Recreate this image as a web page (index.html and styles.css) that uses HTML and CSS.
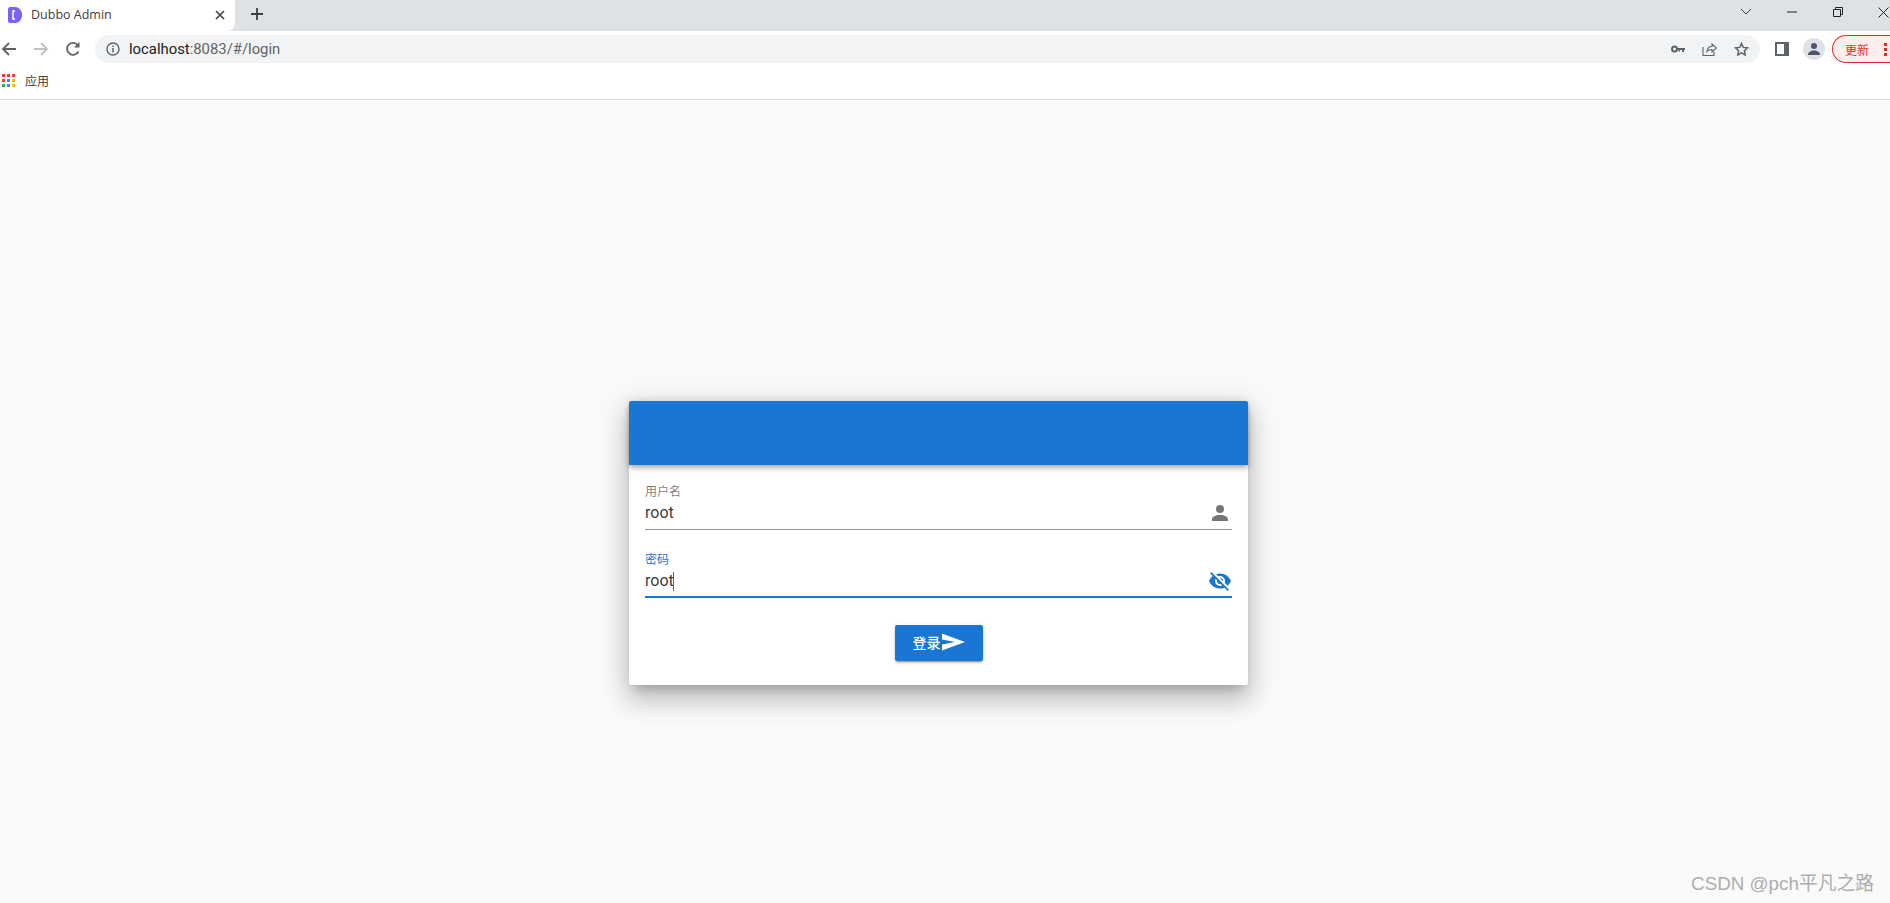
FILE: index.html
```html
<!DOCTYPE html>
<html lang="zh">
<head>
  <meta charset="UTF-8">
  <title>Dubbo Admin</title>
  <link rel="stylesheet" href="styles.css">
</head>
<body>
  <div class="browser">
    <div class="tabstrip">
      <div class="tab">
        <svg class="favicon" width="14" height="16" viewBox="0 0 14 16"><path d="M2 0h5c4 0 7 3.500 7 8s-3 8-7 8H2c-1 0-2-1-2-2V2c0-1 1-2 2-2z" fill="#7b61f5"/><path d="M7 4H5v8h2" fill="none" stroke="#fff" stroke-width="1.500"/></svg>
        <span class="tab_title">Dubbo Admin</span>
        <svg class="tab_close" width="10" height="10" viewBox="0 0 10 10"><path d="M1 1l8 8M9 1l-8 8" stroke="#444" stroke-width="1.700"/></svg>
      </div>
      <svg class="new_tab" width="14" height="14" viewBox="0 0 14 14"><path d="M7 1v12M1 7h12" stroke="#3c4043" stroke-width="1.800"/></svg>
      <div class="win_btns">
        <svg width="12" height="8" viewBox="0 0 12 8"><path d="M1 1l5 5 5-5" fill="none" stroke="#444" stroke-width="1"/></svg>
        <svg width="10" height="2" viewBox="0 0 10 2"><path d="M0 1h10" stroke="#222" stroke-width="1"/></svg>
        <svg width="10" height="10" viewBox="0 0 10 10"><path d="M.5 2.500h7v7h-7zM2.500 2.500v-2h7v7h-2" fill="none" stroke="#222" stroke-width="1"/></svg>
        <svg width="11" height="11" viewBox="0 0 11 11"><path d="M.5.5l10 10M10.500.5l-10 10" stroke="#222" stroke-width="1"/></svg>
      </div>
    </div>
    <div class="toolbar">
      <svg class="nav_icon" width="16" height="16" viewBox="0 0 16 16"><path d="M15 8H2M8 2L2 8l6 6" fill="none" stroke="#5f6368" stroke-width="1.800"/></svg>
      <svg class="nav_icon" width="16" height="16" viewBox="0 0 16 16"><path d="M1 8h13M8 2l6 6-6 6" fill="none" stroke="#bdc1c6" stroke-width="1.800"/></svg>
      <svg class="nav_icon" width="16" height="16" viewBox="0 0 16 16"><path d="M13.500 10.500A6 6 0 1 1 13 4.500" fill="none" stroke="#5f6368" stroke-width="1.800"/><path d="M14.500 1v5.500H9z" fill="#5f6368"/></svg>
      <div class="omnibox">
        <svg width="14" height="14" viewBox="0 0 14 14"><circle cx="7" cy="7" r="6" fill="none" stroke="#5f6368" stroke-width="1.400"/><path d="M7 6v4.500M7 3.500v1.500" stroke="#5f6368" stroke-width="1.500"/></svg>
        <span class="url"><b>localhost</b>:8083/#/login</span>
        <div class="omni_right">
          <svg width="14" height="8" viewBox="0 0 14 8"><circle cx="3.500" cy="4" r="2.500" fill="none" stroke="#5f6368" stroke-width="2"/><path d="M6 3h8v2h-1v2h-2V5H9v1.500H7.500V5H6z" fill="#5f6368"/></svg>
          <svg width="15" height="14" viewBox="0 0 15 14"><path d="M1 5v8.500h11V10M5 9.500C5.500 6 8 4.500 10 4.500V2l4.500 4-4.500 4V7.500c-2 0-3.700.500-5 2z" fill="none" stroke="#5f6368" stroke-width="1.100"/></svg>
          <svg width="15" height="14" viewBox="0 0 15 14"><path d="M7.500 1.500l1.800 3.900 4.200.500-3.100 2.900.800 4.200-3.700-2.100-3.700 2.100.800-4.200L1.500 5.900l4.200-.500z" fill="none" stroke="#5f6368" stroke-width="1.500"/></svg>
        </div>
      </div>
      <div class="sidepanel"></div>
      <div class="avatar">
        <svg width="14" height="14" viewBox="0 0 14 14"><circle cx="7" cy="4" r="3" fill="#4a5568"/><path d="M1 13c0-3 3-4.500 6-4.500s6 1.500 6 4.500z" fill="#4a5568"/></svg>
      </div>
      <div class="update"><span>更新</span><i class="dots"></i></div>
    </div>
    <div class="bookmarks">
      <div class="apps">
        <i class="r"></i><i class="r"></i><i class="r"></i>
        <i class="r"></i><i class="b"></i><i class="y"></i>
        <i class="g"></i><i class="b"></i><i class="y"></i>
      </div>
      <span class="apps_label">应用</span>
    </div>
  </div>

  <div class="main">
    <div class="login_card">
      <div class="card_head"></div>
      <form class="card_body">
        <div class="field">
          <label class="field_label">用户名</label>
          <div class="field_row">
            <span class="field_value">root</span>
            <svg width="24" height="24" viewBox="0 0 24 24"><path fill="#757575" d="M12 4a4 4 0 0 1 4 4 4 4 0 0 1-4 4 4 4 0 0 1-4-4 4 4 0 0 1 4-4m0 10c4.420 0 8 1.790 8 4v2H4v-2c0-2.210 3.580-4 8-4z"/></svg>
          </div>
        </div>
        <div class="field focused">
          <label class="field_label">密码</label>
          <div class="field_row">
            <span class="field_value">root<i class="caret"></i></span>
            <svg width="24" height="24" viewBox="0 0 24 24"><path fill="#1976d2" d="M11.830 9L15 12.160V12a3 3 0 0 0-3-3h-.170m-4.300.800l1.550 1.550c-.050.210-.080.420-.080.650a3 3 0 0 0 3 3c.220 0 .440-.030.650-.080l1.550 1.550c-.670.330-1.410.530-2.200.530a5 5 0 0 1-5-5c0-.790.200-1.530.530-2.200M2 4.270l2.280 2.280.450.450C3.080 8.300 1.780 10 1 12c1.730 4.390 6 7.500 11 7.500 1.550 0 3.030-.300 4.380-.840l.430.420L19.730 22 21 20.730 3.270 3M12 7a5 5 0 0 1 5 5c0 .640-.130 1.260-.360 1.820l2.930 2.930c1.500-1.250 2.700-2.890 3.430-4.750-1.730-4.390-6-7.500-11-7.500-1.400 0-2.740.250-4 .700l2.170 2.150C10.740 7.130 11.350 7 12 7z"/></svg>
          </div>
        </div>
        <div class="actions">
          <button type="button" class="login_btn">登录<svg width="24" height="24" viewBox="0 0 24 24"><path fill="#fff" d="M1 3.500L24 12 1 20.500V14.500L14 12 1 9.500z"/></svg></button>
        </div>
      </form>
    </div>
  </div>

  <div class="watermark">CSDN @pch平凡之路</div>
</body>
</html>
```

FILE: styles.css
```css
* {
  box-sizing: border-box;
}

html, body {
  height: 100%;
}

body {
  position: relative;
  margin: 0;
  background: #fafafa;
  display: flex;
  flex-direction: column;
  overflow: hidden;
  font-family: "Roboto", "Noto Sans CJK SC", sans-serif;
}

.browser {
  background: #fff;
  border-bottom: 1px solid #dadce0;
  height: 100px;
}

.tabstrip {
  display: flex;
  align-items: center;
  height: 31px;
  background: #dee1e6;
}
.tab {
  display: flex;
  align-items: center;
  width: 235px;
  height: 31px;
  padding: 0 10px 2px 8px;
  background: #fff;
  border-bottom-right-radius: 8px;
}
.favicon {flex: none;}
.tab_title {
  flex: 1;
  margin-left: 9px;
  font-family: "Open Sans", "Liberation Sans", sans-serif;
  font-size: 12.500px;
  color: #3c4043;
}
.new_tab {
  margin-left: 15px;
  margin-bottom: 3px;
}
.win_btns {
  display: flex;
  align-items: center;
  gap: 35.500px;
  margin-left: auto;
  margin-right: 1px;
  padding-bottom: 7px;
  height: 31px;
}

.toolbar {
  display: flex;
  align-items: center;
  height: 36px;
  background: #fff;
  padding-left: 1px;
}
.nav_icon {
  flex: none;
  margin-right: 16px;
}
.omnibox {
  flex: none;
  display: flex;
  align-items: center;
  width: 1665px;
  height: 28px;
  margin-left: -2px;
  padding: 0 11px 0 11px;
  background: #f1f3f4;
  border-radius: 14px;
}
.url {
  margin-left: 9px;
  font-size: 14.850px;
  color: #5f6368;
}
.url b {
  font-weight: 400;
  color: #202124;
}
.omni_right {
  display: flex;
  align-items: center;
  gap: 17px;
  margin-left: auto;
}
.sidepanel {
  flex: none;
  width: 14px;
  height: 14px;
  margin-left: 15px;
  background: #fff;
  border: 2px solid #5f6368;
  border-right-width: 5px;
}
.avatar {
  flex: none;
  display: flex;
  align-items: center;
  justify-content: center;
  width: 22px;
  height: 22px;
  margin-left: 14px;
  background: #dee1e6;
  border-radius: 50%;
}
.update {
  flex: none;
  display: flex;
  align-items: center;
  width: 70px;
  height: 28px;
  margin-left: 7px;
  padding-left: 12px;
  background: #fdeeee;
  border: 1px solid #d93025;
  border-right: 0;
  border-radius: 14px 0 0 14px;
  font-size: 12px;
  color: #d93025;
}
.dots {
  width: 3px;
  height: 15px;
  margin-left: 15px;
  background: radial-gradient(circle, #d93025 1.500px, transparent 1.600px) 0 0 / 3px 5px;
}

.bookmarks {
  display: flex;
  align-items: center;
  height: 26px;
  padding-left: 2px;
  background: #fff;
}
.apps {
  display: grid;
  grid-template-columns: repeat(3, 3px);
  grid-auto-rows: 3px;
  gap: 2px;
}
.apps i {display: block;}
.apps .r {background: #ea4335;}
.apps .b {background: #4285f4;}
.apps .y {background: #fbbc04;}
.apps .g {background: #34a853;}
.apps_label {
  margin-left: 10px;
  font-size: 12px;
  color: #3c4043;
}

.main {
  flex: 1;
  display: flex;
  justify-content: center;
}
.login_card {
  width: 619px;
  height: 284px;
  margin-top: 301px;
  margin-right: 13px;
  background: #fff;
  border-radius: 2px;
  box-shadow: 0 8px 10px -5px rgba(0,0,0,.2), 0 16px 24px 2px rgba(0,0,0,.14), 0 6px 30px 5px rgba(0,0,0,.12);
}
.card_head {
  position: relative;
  height: 64px;
  background: #1976d2;
  border-radius: 2px 2px 0 0;
  box-shadow: 0 2px 4px -1px rgba(0,0,0,.2), 0 4px 5px 0 rgba(0,0,0,.14), 0 1px 10px 0 rgba(0,0,0,.12);
}
.card_body {
  display: flex;
  flex-direction: column;
  padding: 20px 16px 0;
}
.field {
  height: 45px;
  border-bottom: 1px solid #8f8f8f;
  margin-bottom: 23px;
}
.field.focused {
  border-bottom: 2px solid #1976d2;
}
.field_label {
  display: block;
  height: 14px;
  font-size: 12px;
  line-height: 14px;
  color: rgba(0,0,0,.54);
}
.focused .field_label {color: #1976d2;}
.field_row {
  display: flex;
  align-items: center;
  justify-content: space-between;
  height: 26px;
  margin-top: 1px;
}
.field_row svg {flex: none;}
.field_value {
  position: relative;
  top: -1px;
  font-size: 16px;
  color: rgba(0,0,0,.8);
}
.caret {
  position: absolute;
  top: 1px;
  right: 0;
  width: 1px;
  height: 19px;
  background: #1976d2;
}
.actions {
  display: flex;
  justify-content: center;
  margin-top: 4px;
}
.login_btn {
  display: flex;
  align-items: center;
  justify-content: center;
  width: 88px;
  height: 36px;
  padding: 0 0 2px;
  background: #1976d2;
  border: 0;
  border-radius: 2px;
  box-shadow: 0 3px 1px -2px rgba(0,0,0,.2), 0 2px 2px 0 rgba(0,0,0,.14), 0 1px 5px 0 rgba(0,0,0,.12);
  font-family: inherit;
  font-size: 14px;
  font-weight: 500;
  color: #fff;
}

.watermark {
  position: absolute;
  right: 16px;
  bottom: 8px;
  font-family: "Liberation Sans", "Noto Sans CJK SC", sans-serif;
  font-size: 18.800px;
  color: #adadad;
}
```
